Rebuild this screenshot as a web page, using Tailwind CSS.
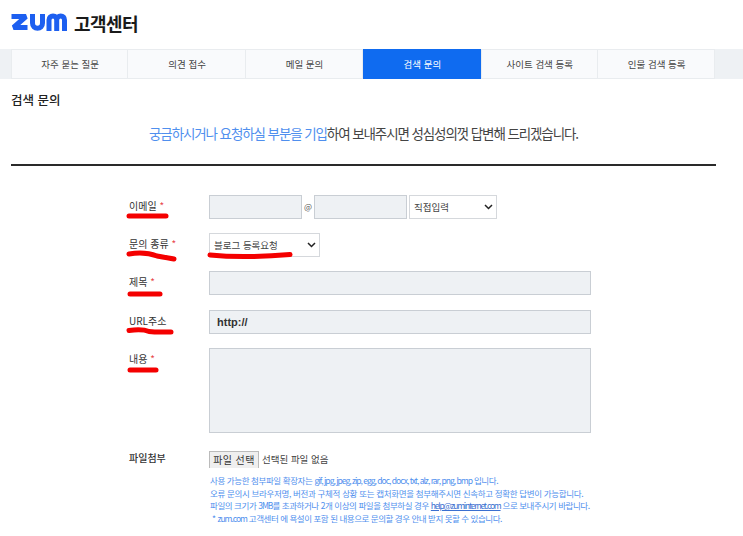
<!DOCTYPE html>
<html lang="ko">
<head>
<meta charset="utf-8">
<script src="https://cdn.jsdelivr.net/npm/@tailwindcss/browser@4"></script>
</head>
<body class="relative w-[743px] h-[536px] overflow-hidden bg-white font-['Noto_Sans_CJK_KR','Noto_Sans',sans-serif] text-[#333]">
<header class="h-[49px] pl-[11px] pt-[11px] flex items-start gap-[5px]">
  <svg width="58" height="21" viewBox="0 0 58 21" class="mt-[2px]" fill="none" stroke="#1d5ff0" stroke-width="5" aria-label="zum">
    <path d="M0.500 3.500h14.500L2.500 14.500H16.500" stroke-linejoin="bevel"/>
    <path d="M21.500 1v9c0 3.600 2.200 5.200 5 5.200s5-1.600 5-5.200V1"/>
    <path d="M38 18V7c0-2.500 1.700-4 4-4s3.700 1.500 3.700 4v11M45.700 7c0-2.500 1.700-4 4-4s3.800 1.500 3.800 4v11"/>
  </svg>
  <span class="text-[18px] leading-[24px] font-bold tracking-[-0.6px] text-[#1a1a1a]">고객센터</span>
</header>
<nav class="h-[30px] bg-[#eef1f4] pl-[11px] flex text-[9.500px] text-[#444]">
  <a class="w-[117.400px] pl-[1px] flex items-center justify-center bg-[#f9fafc] border-x border-y border-[#e9ecef]">자주 묻는 질문</a>
  <a class="w-[117.400px] pl-[1px] flex items-center justify-center bg-[#f9fafc] border-r border-y border-[#e9ecef]">의견 접수</a>
  <a class="w-[117.400px] pl-[1px] flex items-center justify-center bg-[#f9fafc] border-r border-y border-[#e9ecef]">메일 문의</a>
  <a class="w-[117.400px] pl-[1px] flex items-center justify-center bg-[#0f6bf0] text-white">검색 문의</a>
  <a class="w-[117.400px] pl-[1px] flex items-center justify-center bg-[#f9fafc] border-x border-y border-[#e9ecef]">사이트 검색 등록</a>
  <a class="w-[117.400px] pl-[1px] flex items-center justify-center bg-[#f9fafc] border-r border-y border-[#e9ecef]">인물 검색 등록</a>
</nav>
<main class="pl-[11px] w-[716px]">
  <h1 class="mt-[12px] text-[12.500px] leading-[18px] font-medium text-[#222]">검색 문의</h1>
  <p class="mt-[13px] text-center text-[13.500px] leading-[22px] tracking-[-1.1px] text-[#444]"><span class="text-[#4f8fee]">궁금하시거나 요청하실 부분을 기입</span>하여 보내주시면 성심성의껏 답변해 드리겠습니다.</p>
  <div class="mt-[20px] h-[2px] bg-[#2a2a2a]"></div>
  <form class="mt-[29px] pl-[118px] flex flex-col text-[10px]">
    <div class="flex h-[24px] mb-[14px]">
      <label class="w-[80px] pt-[3px] text-[#333]">이메일 <span class="text-[#e8474c]">*</span></label>
      <div class="w-[93px] bg-[#eef1f4] border border-[#c9ced4]"></div>
      <span class="w-[12px] text-center text-[#555] text-[8.500px] leading-[22px]">@</span>
      <div class="w-[93px] bg-[#eef1f4] border border-[#c9ced4]"></div>
      <div class="ml-[2px] w-[88px] border border-[#d5d8dc] flex items-center justify-between pl-[4px] pr-[3px] text-[9.500px] text-[#444]">직접입력
        <svg width="9" height="6" viewBox="0 0 9 6" fill="none" stroke="#222" stroke-width="1.500"><path d="M1 1l3.500 3.500L8 1"/></svg>
      </div>
    </div>
    <div class="flex h-[24px] mb-[14px]">
      <label class="w-[80px] pt-[3px]">문의 종류 <span class="text-[#e8474c]">*</span></label>
      <div class="w-[111px] border border-[#d5d8dc] flex items-center justify-between pl-[4px] pr-[3px] text-[9.500px] text-[#444]">블로그 등록요청
        <svg width="9" height="6" viewBox="0 0 9 6" fill="none" stroke="#222" stroke-width="1.500"><path d="M1 1l3.500 3.500L8 1"/></svg>
      </div>
    </div>
    <div class="flex h-[24px] mb-[15px]">
      <label class="w-[80px] pt-[3px]">제목 <span class="text-[#e8474c]">*</span></label>
      <div class="w-[382px] bg-[#eef1f4] border border-[#c9ced4]"></div>
    </div>
    <div class="flex h-[24px] mb-[14px]">
      <label class="w-[80px] pt-[3px]">URL주소</label>
      <div class="w-[382px] bg-[#eef1f4] border border-[#c9ced4] pl-[7px] flex items-center font-['Liberation_Sans',sans-serif] font-bold text-[11px] text-[#333]">http://</div>
    </div>
    <div class="flex h-[85px] mb-[18px]">
      <label class="w-[80px] pt-[3px]">내용 <span class="text-[#e8474c]">*</span></label>
      <div class="w-[382px] bg-[#eef1f4] border border-[#c9ced4]"></div>
    </div>
    <div class="flex h-[17px] mb-[6px]">
      <label class="w-[80px] font-medium leading-[14px]">파일첨부</label>
      <span class="w-[50px] h-[17px] bg-[#efefef] border border-[#bbb] border-b-0 text-center leading-[16px] tracking-[0.400px] text-[#333]">파일 선택</span>
      <span class="ml-[3px] text-[9.500px] leading-[17px] text-[#444]">선택된 파일 없음</span>
    </div>
    <div class="ml-[81px] text-[8.500px] leading-[12.600px] text-[#4f8fee] whitespace-nowrap">
      <p class="tracking-[-0.400px]">사용 가능한 첨부파일 확장자는 <span class="tracking-[-1px]">gif, jpg, jpeg, zip, egg, doc, docx, txt, alz, rar, png, bmp</span> 입니다.</p>
      <p class="tracking-[-0.330px]">오류 문의시 브라우저명, 버전과 구체적 상황 또는 캡처화면을 첨부해주시면 신속하고 정확한 답변이 가능합니다.</p>
      <p class="tracking-[-0.430px]">파일의 크기가 <span class="tracking-[-1px]">3MB</span>를 초과하거나 2개 이상의 파일을 첨부하실 경우 <a class="underline tracking-[-1.200px] text-[#3a6fd0]">help@zuminternet.com</a> 으로 보내주시기 바랍니다.</p>
      <p class="pl-[2px] tracking-[-0.460px]">* <span class="tracking-[-1px]">zum.com</span> 고객센터 에 욕설이 포함 된 내용으로 문의할 경우 안내 받지 못할 수 있습니다.</p>
    </div>
  </form>
</main>
<svg class="absolute left-0 top-0 pointer-events-none" width="743" height="536" fill="none" stroke="#f40000" stroke-width="5" stroke-linecap="round" stroke-linejoin="round">
  <path d="M129 216h37"/>
  <path d="M129 254c12-2 20-1 28 2 6 1 12 2 17 3"/>
  <path d="M210 255c20 2 50 2 80-0.500"/>
  <path d="M130 294h30"/>
  <path d="M129 330.500c8-1 14-1.500 20 1 8 1 15 0.500 22 0.500"/>
  <path d="M130 370h26"/>
</svg>
</body>
</html>
